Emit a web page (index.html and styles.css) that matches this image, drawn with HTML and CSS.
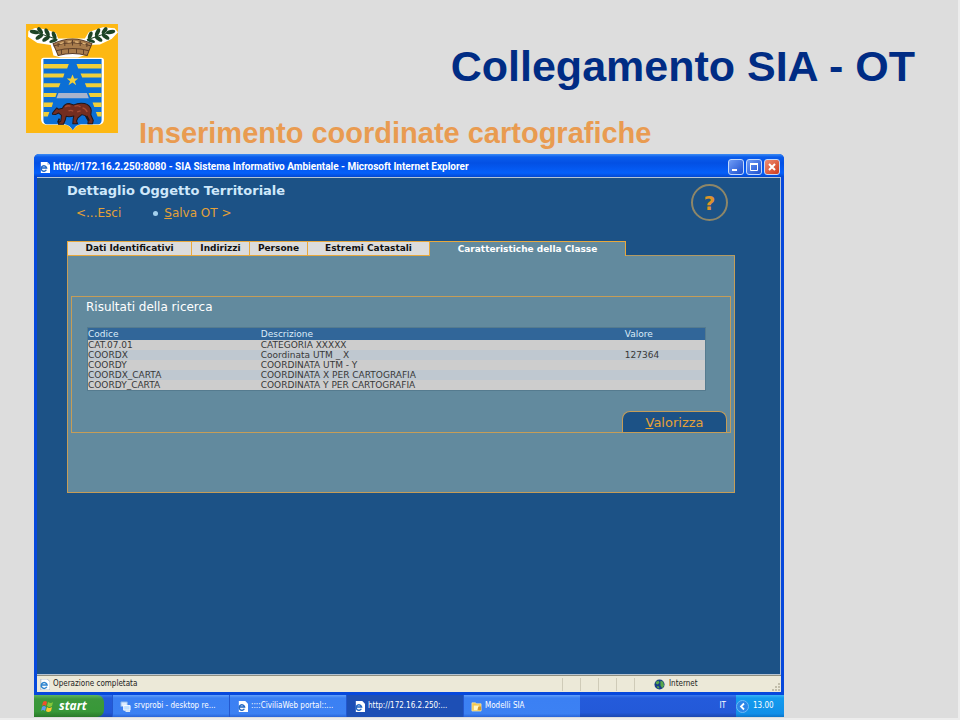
FILE: index.html
```html
<!DOCTYPE html>
<html lang="it">
<head>
<meta charset="utf-8">
<title>Collegamento SIA - OT</title>
<link rel="stylesheet" href="styles.css">
</head>
<body>
<div class="slide">
  <header class="slide-head">
    <svg class="crest" viewBox="33 27 275 326" aria-hidden="true">
      <rect x="33" y="27" width="275" height="326" fill="#fdb813"/>
      <path d="M78 132q0-8 8-8h172q8 0 8 8v176q0 14-12 16h-58q-14 2-23 17q-10-15-23-17H92q-14-2-14-16z" transform="translate(0 4)" fill="#fff"/>
      <path d="M85 132h174v182q0 12-10 13h-52q-16 2-24 18q-9-16-24-18H95q-10-1-10-13z" fill="#0b6fd6"/>
      <g fill="#f0cf3a">
        <path d="M85 147h76l-5 13H85zM85 175h63l-4 12H85zM85 204h51l-5 12H85zM85 233h40l-4 12H85zM85 262h29l-4 13H85zM85 290h18l-5 14H85z"/>
        <path d="M184 147h75v13h-70zM196 175h63v12h-58zM209 204h50v12h-45zM220 233h39v12h-34zM232 262h27v13h-22zM242 290h17v14h-12z"/>
        <path d="M172 178l5 12h12l-10 8 4 12-11-8-12 8 5-12-10-8h12z"/>
      </g>
      <path d="M130 233h85l6 16h-97z" fill="#a9b4cc"/>
      <path d="M112 294l8-10 5-6 5 4 12-3q6-14 20-14l14 4q14-7 32-4 17 4 20 20l-1 14 7 16-2 10h-14l1-8-9-16-10-3-12 10-4 9 3 8h-14l1-14 2-9q-14 4-23 1l-3 12-5 12h-15l1-6 6-4 2-17-9-7-9 5-9-1z" fill="#742d20" stroke="#241618" stroke-width="3" stroke-linejoin="round"/>
      <path d="M150 275q8-6 16-2M178 273q10-5 18 2M160 287q8-4 14 1M202 278q10 2 14 12M186 290l10-3" stroke="#a84c33" stroke-width="4" fill="none"/>
      <path d="M128 322l5-12M222 316l-8-14" stroke="#241618" stroke-width="5"/>
      <path d="M40 48l20-9 33 4 30 12 6 15h80l12-19 42-14 35 3 10 12-19 20-35 16-37 2-7 30-22 7h-51l-22-6-8-31-40-6-28-19z" fill="#fff"/>
      <g fill="#1d4426">
        <ellipse cx="58" cy="51" rx="14" ry="6" transform="rotate(12 58 51)"/><ellipse cx="75" cy="47" rx="6" ry="12" transform="rotate(-35 75 47)"/><ellipse cx="73" cy="65" rx="13" ry="6" transform="rotate(-35 73 65)"/><ellipse cx="96" cy="52" rx="6" ry="13" transform="rotate(-25 96 52)"/><ellipse cx="93" cy="71" rx="13" ry="6" transform="rotate(-35 93 71)"/><ellipse cx="117" cy="61" rx="6" ry="12" transform="rotate(-20 117 61)"/><ellipse cx="115" cy="77" rx="13" ry="5" transform="rotate(-20 115 77)"/>
        <ellipse cx="286" cy="51" rx="14" ry="6" transform="rotate(-12 286 51)"/><ellipse cx="268" cy="47" rx="6" ry="12" transform="rotate(35 268 47)"/><ellipse cx="271" cy="65" rx="13" ry="6" transform="rotate(35 271 65)"/><ellipse cx="247" cy="52" rx="6" ry="13" transform="rotate(25 247 52)"/><ellipse cx="250" cy="71" rx="13" ry="6" transform="rotate(35 250 71)"/><ellipse cx="225" cy="61" rx="6" ry="12" transform="rotate(20 225 61)"/><ellipse cx="227" cy="77" rx="13" ry="5" transform="rotate(20 227 77)"/>
      </g>
      <path d="M55 49l65 22M290 49l-65 22" stroke="#1d4426" stroke-width="3"/>
      <path d="M114 86q58-28 116 0l-8 19-6 16q-44-11-87 0l-7-17z" fill="#a87c4c" stroke="#5a3c26" stroke-width="3"/>
      <path d="M115 93q57-20 113 0M123 107q50-13 98 0" fill="none" stroke="#5f4029" stroke-width="3"/>
      <path d="M129 84v12M149 78v15M172 75v16M195 78v15M215 84v12M139 103v14M160 101v14M184 101v14M205 103v14" fill="none" stroke="#5f4029" stroke-width="3"/>
      <path d="M135 86l10-3M157 81l10-1M180 80l10 2M202 84l9 3" stroke="#e0b67a" stroke-width="4"/>
    </svg>
    <div class="headings">
      <h1>Collegamento SIA - OT</h1>
      <h2>Inserimento coordinate cartografiche</h2>
    </div>
  </header>

  <div class="desktop">
    <section class="window">
      <div class="titlebar">
        <svg class="icon" viewBox="0 0 12 12" aria-hidden="true"><path d="M2 0h7l3 3v9H2z" fill="#fff"/><path d="M9 0v3h3" fill="#b9c6dc"/><path d="M8 8.500A3 3 0 1 1 8.300 6.500H3" fill="none" stroke="#1f66c4" stroke-width="1.500"/></svg>
        <span class="caption">http://172.16.2.250:8080 - SIA Sistema Informativo Ambientale - Microsoft Internet Explorer</span>
        <button class="ctl" aria-label="Riduci a icona"><svg viewBox="0 0 14 14"><path d="M3 10h5" stroke="#fff" stroke-width="2"/></svg></button>
        <button class="ctl" aria-label="Ingrandisci"><svg viewBox="0 0 14 14"><path d="M3.500 4.500h7v6h-7z" fill="none" stroke="#fff"/><path d="M3 4h8" stroke="#fff" stroke-width="2"/></svg></button>
        <button class="ctl close" aria-label="Chiudi"><svg viewBox="0 0 14 14"><path d="M4 4l6 6M10 4l-6 6" stroke="#fff" stroke-width="2"/></svg></button>
      </div>

      <main class="page">
        <div class="page-head">
          <div>
            <h3>Dettaglio Oggetto Territoriale</h3>
            <nav class="actions">
              <a href="#esci">&lt;...Esci</a>
              <span class="dot"></span>
              <a href="#salva"><u>S</u>alva OT &gt;</a>
            </nav>
          </div>
          <button class="help" aria-label="Aiuto">?</button>
        </div>

        <div class="tabs">
          <button class="tab">Dati Identificativi</button>
          <button class="tab">Indirizzi</button>
          <button class="tab">Persone</button>
          <button class="tab">Estremi Catastali</button>
          <button class="tab active">Caratteristiche della Classe</button>
          <span class="tab-rest"></span>
        </div>

        <div class="panel">
          <div class="results">
            <h4>Risultati della ricerca</h4>
            <table>
              <colgroup><col class="c-code"><col class="c-desc"><col></colgroup>
              <thead><tr><th>Codice</th><th>Descrizione</th><th>Valore</th></tr></thead>
              <tbody>
                <tr><td>CAT.07.01</td><td>CATEGORIA XXXXX</td><td></td></tr>
                <tr><td>COORDX</td><td>Coordinata UTM _ X</td><td>127364</td></tr>
                <tr><td>COORDY</td><td>COORDINATA UTM - Y</td><td></td></tr>
                <tr><td>COORDX_CARTA</td><td>COORDINATA X PER CARTOGRAFIA</td><td></td></tr>
                <tr><td>COORDY_CARTA</td><td>COORDINATA Y PER CARTOGRAFIA</td><td></td></tr>
              </tbody>
            </table>
            <button class="valorizza"><u>V</u>alorizza</button>
          </div>
        </div>
      </main>

      <footer class="status">
        <svg class="icon" viewBox="0 0 12 12" aria-hidden="true"><path d="M2 0h7l3 3v9H2z" fill="#fff" stroke="#8296b4" stroke-width=".6"/><path d="M8.500 8.500A3.200 3.200 0 1 1 8.800 6.500H3" fill="none" stroke="#2c83cf" stroke-width="1.600"/></svg>
        <span class="message">Operazione completata</span>
        <i></i><i></i><i></i><i></i><i></i>
        <span class="zone">
          <svg class="icon" viewBox="0 0 12 12" aria-hidden="true"><circle cx="6" cy="6" r="5.500" fill="#173d86"/><path d="M2 3l3-1 1 2-2 2-2-1zM7 2l3 1 1 4-2 3-2-3zM3 8l2 0 1 2-2 0z" fill="#58a84a"/></svg>
          Internet
        </span>
        <svg class="grip" viewBox="0 0 9 9" aria-hidden="true"><path d="M6 0h2v2H6zM3 3h2v2H3zM6 3h2v2H6zM0 6h2v2H0zM3 6h2v2H3zM6 6h2v2H6z" fill="#c2beaa"/></svg>
      </footer>
    </section>

    <div class="taskbar">
      <button class="start">
        <svg class="flag" viewBox="0 0 13 13" aria-hidden="true"><path d="M2 2q2-2 4 0L5 6Q3 4 1 6z" fill="#f0502c"/><path d="M7 2q3 2 5 0l-1 4q-3 2-5 0z" fill="#83c83a"/><path d="M1 7q2-2 4 0l-1 4q-2-2-4 0z" fill="#5b9bf0"/><path d="M6 7q2 2 5 0l-1 4q-3 2-5 0z" fill="#fbc62e"/></svg>
        start
      </button>
      <button class="task">
        <svg class="icon" viewBox="0 0 12 12" aria-hidden="true"><path d="M1 1h7v5H1z" fill="#dcecff" stroke="#7faee8"/><path d="M4 5h7v5H4z" fill="#bfe0ff" stroke="#fff"/><path d="M6 11h5" stroke="#dde8f5" stroke-width="2"/></svg>
        srvprobi - desktop re...</button>
      <button class="task">
        <svg class="icon" viewBox="0 0 12 12" aria-hidden="true"><path d="M2 0h7l3 3v9H2z" fill="#fff"/><path d="M8 8.500A3 3 0 1 1 8.300 6.500H3" fill="none" stroke="#1f66c4" stroke-width="1.500"/></svg>
        ::::CiviliaWeb portal::...</button>
      <button class="task current">
        <svg class="icon" viewBox="0 0 12 12" aria-hidden="true"><path d="M2 0h7l3 3v9H2z" fill="#fff"/><path d="M8 8.500A3 3 0 1 1 8.300 6.500H3" fill="none" stroke="#1f66c4" stroke-width="1.500"/></svg>
        http://172.16.2.250:...</button>
      <button class="task">
        <svg class="icon" viewBox="0 0 12 12" aria-hidden="true"><path d="M1 2h4l1 1h5v8H1z" fill="#f3c64e" stroke="#fff0b0" stroke-width=".7"/><path d="M3 5h6v5H3z" fill="#fff6c8"/><path d="M8 6h3v4H7z" fill="#d69a2a"/></svg>
        Modelli SIA</button>
      <span class="lang">IT</span>
      <span class="tray">
        <svg class="chevron" viewBox="0 0 13 13" aria-hidden="true"><circle cx="6.500" cy="6.500" r="6" fill="#2c86e8" stroke="#6db9f6"/><path d="M8 3.500l-3 3 3 3" fill="none" stroke="#fff" stroke-width="1.800"/></svg>
        13.00
      </span>
    </div>
  </div>
</div>
</body>
</html>
```
FILE: styles.css
```css
* { box-sizing: border-box; }
body { margin: 0; background: #ededed; font-family: "DejaVu Sans", Verdana, sans-serif; }
h1, h2, h3, h4 { margin: 0; }
button { margin: 0; padding: 0; border: 0; background: none; font: inherit; color: inherit; cursor: pointer; }
svg { display: block; flex: none; }
.icon { width: 11px; height: 11px; }

.slide { min-height: 718px; margin-right: 2px; background: #ddd; }
.slide-head { display: flex; gap: 21px; height: 154px; padding: 24px 43px 0 26px; }
.crest { width: 92px; height: 109px; }
.headings { flex: 1; font-family: "Liberation Sans", Arial, sans-serif; white-space: nowrap; }
h1 { padding-top: 17px; font-size: 43px; line-height: 50px; text-align: right; color: #002c84; }
h2 { padding-top: 22px; font-size: 29px; line-height: 40px; color: #e99b50; }

.desktop { margin: 0 174px 0 34px; }
.window {
  padding: 0 3px 3px;
  background: #0648dc;
  border-radius: 5px 5px 0 0;
  overflow: hidden;
}
.titlebar {
  display: flex; align-items: center; gap: 2px;
  height: 23px; margin: 0 -3px; padding: 3px 4px 0 5px;
  background: linear-gradient(#3c8cf4 0, #0a5ceb 3px, #0350e4 9px, #0560fa 19px, #0348d0 100%);
}
.caption { flex: 1; min-width: 0; padding-left: 1px; font: bold 10px/16px Roboto, sans-serif; color: #fff; white-space: nowrap; }
.ctl {
  width: 16px; height: 16px;
  border: 1px solid #c3d9fb; border-radius: 3px;
  background: linear-gradient(135deg, #6f9cf5, #1d4fcf);
}
.ctl.close { background: linear-gradient(135deg, #ee8f74, #cf3a1b); }

.page {
  height: 498px; padding: 5px 45px 0 30px;
  background: #1c5286; border: solid #b6c4d2; border-width: 1px 1px 1px 0;
}
.page-head { display: flex; justify-content: space-between; height: 58px; padding-right: 7px; }
h3 { font-size: 13px; line-height: 16px; color: #cfe8fb; white-space: nowrap; }
.actions { display: flex; align-items: center; padding: 6px 0 0 9px; font-size: 12px; line-height: 16px; }
.actions a { color: #e3a138; text-decoration: none; }
.dot { width: 5px; height: 5px; margin: 0 6px 0 32px; border-radius: 50%; background: #a3d0ee; }
.help {
  width: 37px; height: 37px; margin-top: 1px;
  border: 2px solid #8d8668; border-radius: 50%;
  font-size: 20px; font-weight: bold; line-height: 30px; color: #dd942a;
}

.tabs { display: grid; grid-template-columns: 124fr 58fr 58fr 122fr 197fr 109fr; height: 15px; }
.tab {
  border: solid #e8a83c; border-width: 1px 0 1px 1px;
  background: #dcdcdc; font-size: 9px; font-weight: bold; line-height: 13px; color: #111; white-space: nowrap;
}
.tab.active { border-width: 1px 1px 0; background: #628a9e; color: #fff; }
.tab-rest { border-bottom: 1px solid #b29a64; }
.panel { height: 237px; padding: 40px 3px; border: solid #c59d58; border-width: 0 1px 1px; background: #628a9e; }
.results {
  display: flex; flex-direction: column; height: 137px; padding: 3px 3px 0 14px;
  border: 1px solid #c59d58;
}
h4 { font-size: 12px; font-weight: normal; line-height: 14px; color: #fff; }
table { width: calc(100% - 24px); margin: 14px 0 0 2px; border-spacing: 0; table-layout: fixed; font-size: 9px; line-height: 10px; color: #383838; outline: 1px solid #557b8f; }
.c-code { width: 28%; }
.c-desc { width: 59%; }
th, td { height: 10px; padding: 0; text-align: left; font-weight: normal; white-space: nowrap; }
th { height: 12px; background: #316699; color: #dcecf8; }
td { background: #cdcdcd; }
tr:nth-child(even) td { background: #bfc8d0; }
.valorizza {
  align-self: flex-end; width: 105px; height: 21px; margin-top: auto;
  border: 1px solid #c59d58; border-bottom: 0; border-radius: 8px 8px 0 0;
  background: #1c5286; font-size: 13px; line-height: 19px; color: #e3a138;
}

.status {
  display: flex; align-items: center; height: 17px; padding-left: 2px;
  background: #ece9d8; border-top: 1px solid #8f8f80;
  font: 8px/14px "DejaVu Sans Condensed", sans-serif; color: #222;
}
.message { flex: 1; padding-left: 3px; }
.status i { width: 18px; height: 13px; border-left: 1px solid #cfcbb8; }
.zone { display: flex; align-items: center; gap: 4px; width: 120px; padding-left: 2px; }
.grip { width: 9px; height: 9px; align-self: flex-end; }

.taskbar {
  display: flex; height: 22px;
  background: linear-gradient(#3a78ec, #245bdb 3px, #2359d8 80%, #1c47b0);
  font: 8px/20px "DejaVu Sans Condensed", sans-serif; color: #fff; white-space: nowrap;
}
.start {
  display: flex; align-items: center; gap: 5px; width: 70px; margin-right: 8px; padding-left: 7px;
  background: linear-gradient(#5fb45f, #3c983c 4px, #389838 75%, #2a7a2a);
  border-radius: 0 7px 7px 0; font: italic bold 12px/20px "Open Sans", sans-serif;
}
.flag { width: 13px; height: 13px; }
.task { display: flex; align-items: center; gap: 3px; width: 117px; padding-left: 7px; border-left: 1px solid #2358cf; background: linear-gradient(#62a0fa, #3b80f3 3px, #3c81f3 85%, #2a65d8); }
.task.current { background: #1d4fb5; }
.lang { margin-left: auto; padding-right: 10px; line-height: 22px; }
.tray { display: flex; align-items: center; gap: 4px; width: 48px; background: linear-gradient(#3cb4f6, #149cee 3px, #118fe8 85%, #0d74c8); }
.chevron { width: 13px; height: 13px; }
```
